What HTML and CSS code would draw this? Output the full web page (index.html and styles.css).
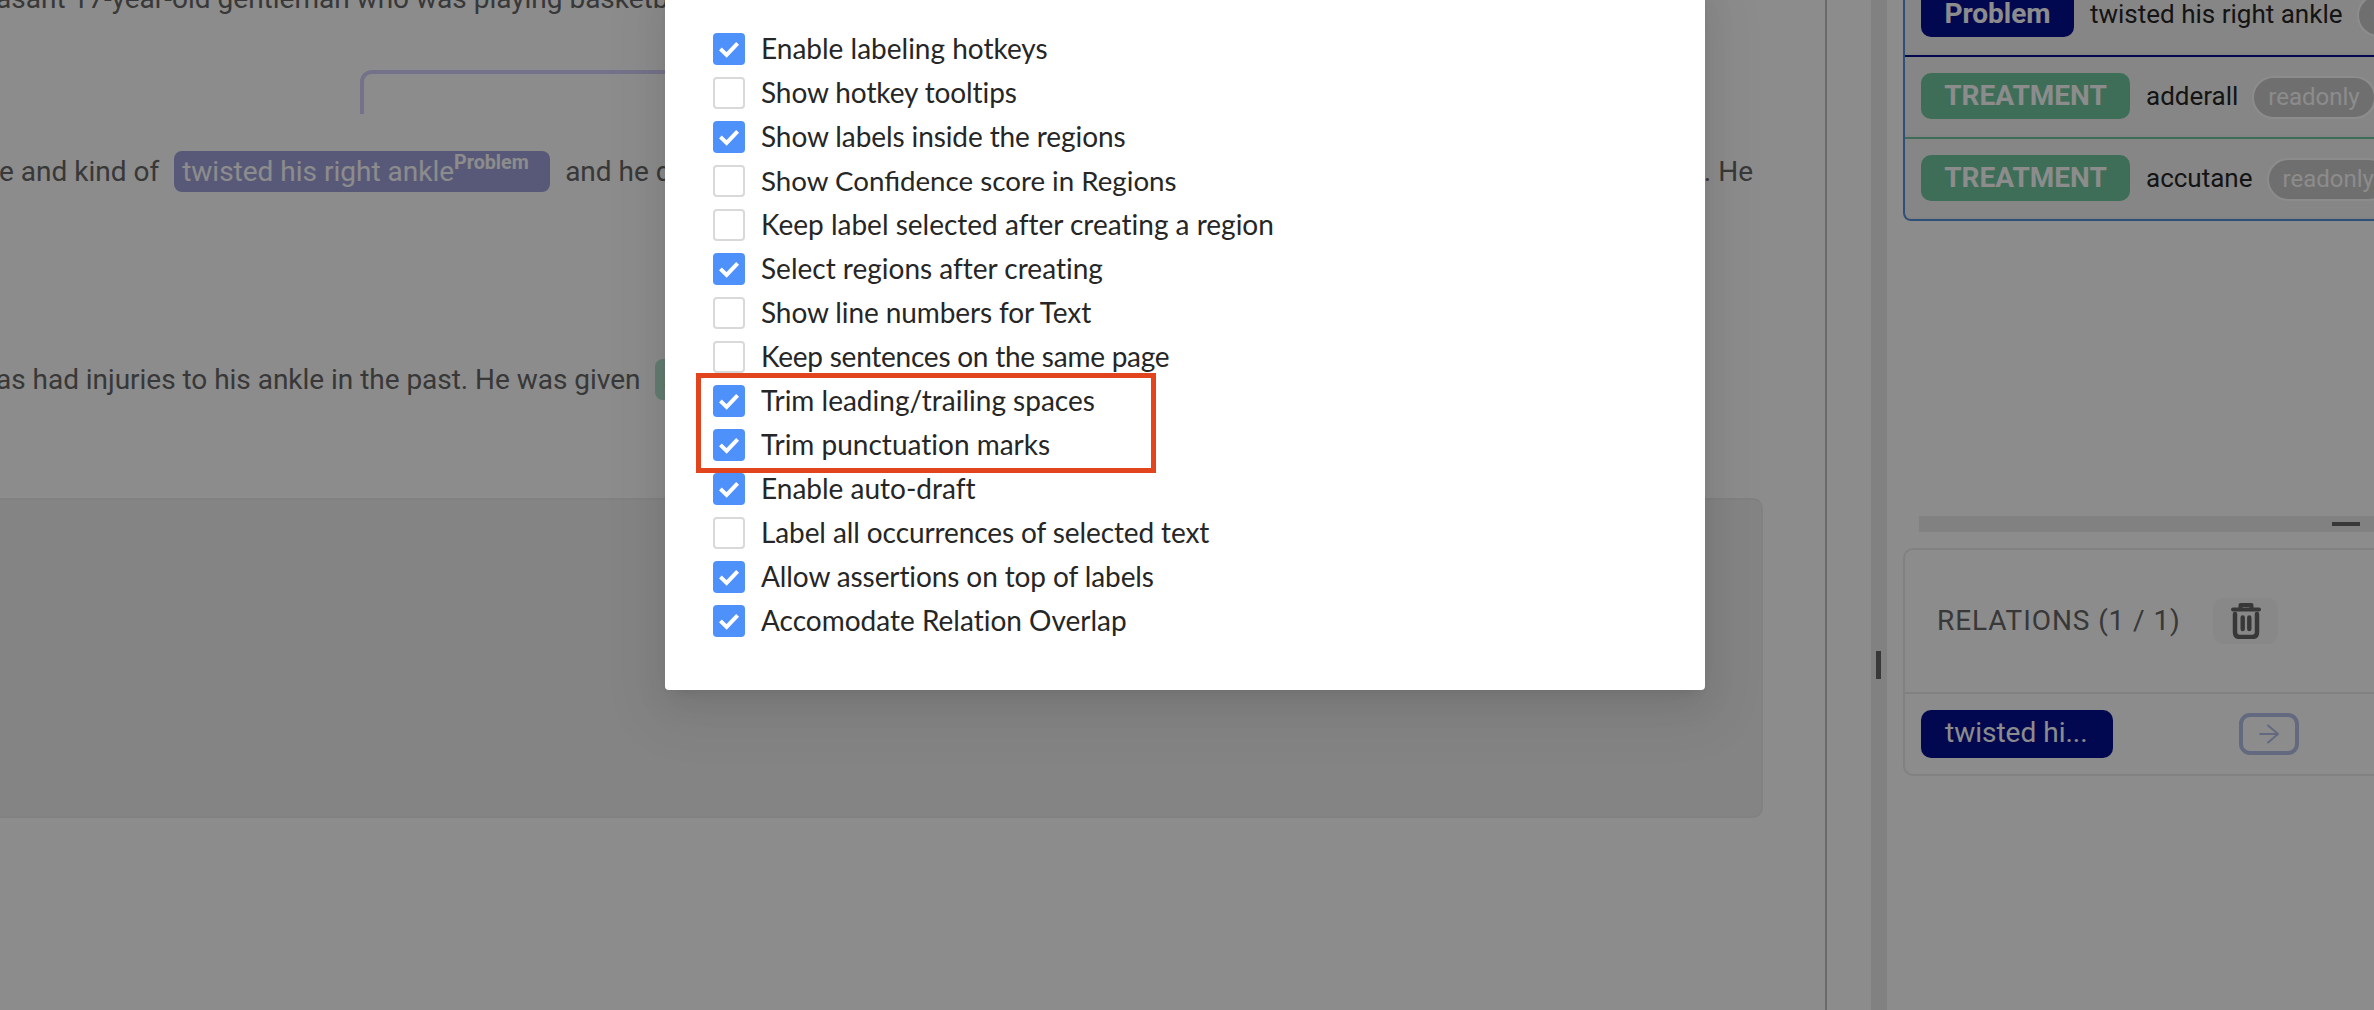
FILE: index.html
```
<!DOCTYPE html>
<html>
<head>
	<meta charset="utf-8">
	<title>Labeling settings</title>
	<link rel="stylesheet" href="styles.css">
</head>
<body>
	<svg class="defs">
		<symbol id="check" viewBox="0 0 32 32">
			<path d="M7.4 15.9 L13.6 21.9 L24.6 10.3" fill="none" stroke="#fff" stroke-width="4"/>
		</symbol>
	</svg>

	<div class="page">
		<div class="text_pane">
			<div class="line line1"><span class="t1">asant 17-year-old gentleman who was playing basketball</span></div>
			<div class="line line2">
				<span class="t2">e and kind of</span>
				<span class="chip problem"><span class="t3">twisted his right ankle</span><sup>Problem</sup></span>
				<span class="t4">and he did</span>
				<span class="t5">. He</span>
			</div>
			<div class="line line3">
				<span class="t6">as had injuries to his ankle in the past. He was given</span>
				<span class="chip treatment">adderall</span>
			</div>
			<div class="empty_box"></div>
			<div class="arc"></div>
		</div>

		<div class="gutter"><i></i></div>

		<div class="side">
			<div class="regions">
				<div class="region navy"><b class="tag s1">Problem</b><span class="name">twisted his right ankle</span><span class="readonly">readonly</span></div>
				<div class="region green"><b class="tag s2">TREATMENT</b><span class="name">adderall</span><span class="readonly">readonly</span></div>
				<div class="region green last"><b class="tag s2">TREATMENT</b><span class="name">accutane</span><span class="readonly">readonly</span></div>
			</div>
			<div class="hbar"><i></i></div>
			<div class="relations">
				<div class="rel_head">
					<span class="rel_title">RELATIONS (1 / 1)</span>
					<span class="trash">
						<svg width="30" height="36" viewBox="0 0 30 36">
							<path d="M2 6.5 H28 M9.5 4.5 V2 H20.5 V4.5" fill="none" stroke="#666" stroke-width="4" stroke-linecap="round" stroke-linejoin="round"/>
							<path d="M4 11 V29 Q4 34 9 34 H21 Q26 34 26 29 V11" fill="none" stroke="#666" stroke-width="4.5" stroke-linecap="round"/>
							<path d="M11.7 14.5 V26 M18.3 14.5 V26" stroke="#666" stroke-width="4.4" stroke-linecap="round"/>
						</svg>
					</span>
				</div>
				<div class="rel_row">
					<span class="rel_tag">twisted hi...</span>
					<span class="arrow">
						<svg width="20" height="20" viewBox="0 0 20 20"><path d="M0.5 10 H19 M8.5 1 L19 10 L8.5 19" fill="none" stroke="#b4bfe8" stroke-width="2"/></svg>
					</span>
				</div>
			</div>
		</div>
	</div>

	<div class="mask"></div>

	<div class="modal">
		<label class="on"><i><svg><use href="#check"/></svg></i><span>Enable labeling hotkeys</span></label>
		<label><i></i><span class="tight">Show hotkey tooltips</span></label>
		<label class="on"><i><svg><use href="#check"/></svg></i><span class="tight">Show labels inside the regions</span></label>
		<label><i></i><span class="liga">Show Confidence score in Regions</span></label>
		<label><i></i><span>Keep label selected after creating a region</span></label>
		<label class="on"><i><svg><use href="#check"/></svg></i><span>Select regions after creating</span></label>
		<label><i></i><span class="tight">Show line numbers for Text</span></label>
		<label><i></i><span class="tighter">Keep sentences on the same page</span></label>
		<label class="on"><i><svg><use href="#check"/></svg></i><span>Trim leading/trailing spaces</span></label>
		<label class="on"><i><svg><use href="#check"/></svg></i><span>Trim punctuation marks</span></label>
		<label class="on"><i><svg><use href="#check"/></svg></i><span>Enable auto-draft</span></label>
		<label><i></i><span class="tight">Label all occurrences of selected text</span></label>
		<label class="on"><i><svg><use href="#check"/></svg></i><span class="tight">Allow assertions on top of labels</span></label>
		<label class="on"><i><svg><use href="#check"/></svg></i><span>Accomodate Relation Overlap</span></label>
		<div class="marker"></div>
	</div>
</body>
</html>
```
FILE: styles.css
```
*{
	box-sizing: border-box;
}
body{
	margin: 0;
	height: 1010px;
	overflow: hidden;
	position: relative;
	background-color: #fff;
	font: 28px Roboto, sans-serif;
	color: #666;
}
.defs{
	display: none;
}
.page{
	display: flex;
	height: 1010px;
}
/* document text */
.text_pane{
	position: relative;
	width: 1827px;
	border-right: 2px solid #c2c2c2;
	overflow: hidden;
	flex: none;
}
.line{
	display: flex;
	height: 41px;
	line-height: 41px;
	width: 1753px;
	white-space: nowrap;
}
.line1{
	margin-top: -22px;
}
.line2{
	margin-top: 132px;
}
.line3{
	margin-top: 167px;
}
.t1{
	margin-left: -4px;
}
.t2{
	margin-left: -1px;
}
.t6{
	margin-left: -4px;
	letter-spacing: -.03px;
}
.chip{
	height: 41px;
	border-radius: 8px;
	margin-left: 15px;
	padding-left: 8px;
	flex: none;
}
.problem{
	width: 376px;
	background-color: #a0a3da;
	color: #fff;
	display: flex;
}
.problem sup{
	font-size: 19.7px;
	font-weight: bold;
	line-height: 24px;
}
.treatment{
	width: 150px;
	background-color: #b7e3cf;
}
.t4{
	margin-left: 15px;
}
.t5{
	margin-left: auto;
}
.empty_box{
	width: 1773px;
	height: 320px;
	margin: 98px 0 0 -10px;
	background-color: #f0f0f0;
	border: 2px solid #ececec;
	border-radius: 10px;
}
.arc{
	position: absolute;
	left: 360px;
	top: 70px;
	width: 400px;
	height: 44px;
	border: 4px solid #d3cffb;
	border-width: 4px 0 0 4px;
	border-top-left-radius: 12px;
}
/* split bars */
.gutter{
	width: 16px;
	margin-left: 44px;
	background-color: #ececec;
	padding: 651px 0 0 5px;
	flex: none;
}
.gutter i{
	display: block;
	width: 5px;
	height: 28px;
	background-color: #666;
}
.side{
	width: 471px;
	margin-left: 16px;
	flex: none;
	overflow: hidden;
}
.regions{
	height: 221px;
	border: 2px solid #5392db;
	border-top: 0;
	border-right: 0;
	border-radius: 0 0 0 8px;
	overflow: hidden;
	background-color: #f5f5f5;
	color: #262626;
}
.region{
	display: flex;
	align-items: center;
	height: 82px;
	padding: 0 0 2px 16px;
	border-bottom: 2px solid #71c8a0;
	box-shadow: inset 0 -2px #efefef;
	white-space: nowrap;
}
.region > *{
	flex: none;
}
.region.navy{
	margin-top: -25px;
	border-bottom-color: #040f91;
}
.region.last{
	border-bottom-color: #ececec;
}
.tag{
	height: 46px;
	line-height: 45px;
	border-radius: 10px;
	text-align: center;
	margin-right: 16px;
	color: #fff;
	background-color: #71c8a0;
}
.navy .tag{
	background-color: #040f91;
}
.s1{
	width: 153px;
}
.s2{
	width: 209px;
}
.name{
	font-size: 26px;
}
.readonly{
	height: 43px;
	line-height: 38px;
	border: 2px solid #fff;
	border-radius: 22px;
	padding: 0 14px;
	margin: 2px 0 0 14px;
	background-color: #cacaca;
	color: #fff;
	font-size: 24px;
}
.hbar{
	height: 16px;
	margin: 295px 0 0 16px;
	padding: 6px 0 0 413px;
	background-color: #ececec;
}
.hbar i{
	display: block;
	width: 28px;
	height: 4px;
	background-color: #666;
}
.relations{
	height: 228px;
	margin-top: 16px;
	border: 2px solid #ececec;
	border-right: 0;
	border-radius: 10px 0 0 10px;
}
.rel_head{
	display: flex;
	align-items: center;
	height: 144px;
	padding-left: 32px;
	border-bottom: 2px solid #ececec;
}
.rel_title{
	width: 276px;
	margin-top: -2px;
	letter-spacing: .9px;
}
.trash{
	display: flex;
	align-items: center;
	justify-content: center;
	width: 65px;
	height: 46px;
	border-radius: 10px;
	background-color: #f8f8f8;
}
.rel_row{
	display: flex;
	align-items: center;
	height: 80px;
	padding-left: 16px;
}
.rel_tag{
	width: 192px;
	height: 48px;
	line-height: 45px;
	border-radius: 10px;
	padding-left: 24px;
	background-color: #040f91;
	color: #fff;
}
.arrow{
	display: flex;
	align-items: center;
	justify-content: center;
	width: 60px;
	height: 42px;
	margin-left: 126px;
	border: 4px solid #b4bfe8;
	border-radius: 11px;
}
/* modal */
.mask{
	position: absolute;
	left: 0;
	top: 0;
	width: 100%;
	height: 100%;
	background-color: rgba(0,0,0,.45);
}
.modal{
	position: absolute;
	left: 665px;
	top: -20px;
	width: 1040px;
	height: 710px;
	padding: 47px 48px 0;
	background-color: #fff;
	border-radius: 4px;
	box-shadow: 0 6px 12px -8px rgba(0,0,0,.12), 0 12px 32px rgba(0,0,0,.08), 0 18px 56px 16px rgba(0,0,0,.05);
	color: #262626;
	font-family: Lato, sans-serif;
}
.modal label{
	display: flex;
	align-items: center;
	height: 44px;
	white-space: nowrap;
}
.modal label span{
	margin-top: -2px;
	font-variant-ligatures: none;
}
.modal label .liga{
	font-variant-ligatures: normal;
	font-size: 27.7px;
}
.modal .tight{
	letter-spacing: -.1px;
}
.modal .tighter{
	letter-spacing: -.24px;
}
.modal label i{
	width: 32px;
	height: 32px;
	margin-right: 16px;
	border: 2px solid #d9d9d9;
	border-radius: 4px;
}
.modal .on i{
	border: 0;
	background-color: #4f91fb;
}
.modal svg{
	display: block;
	width: 32px;
	height: 32px;
}
.marker{
	position: absolute;
	left: 31px;
	top: 393px;
	width: 460px;
	height: 100px;
	border: 5px solid #e2451e;
}
```
